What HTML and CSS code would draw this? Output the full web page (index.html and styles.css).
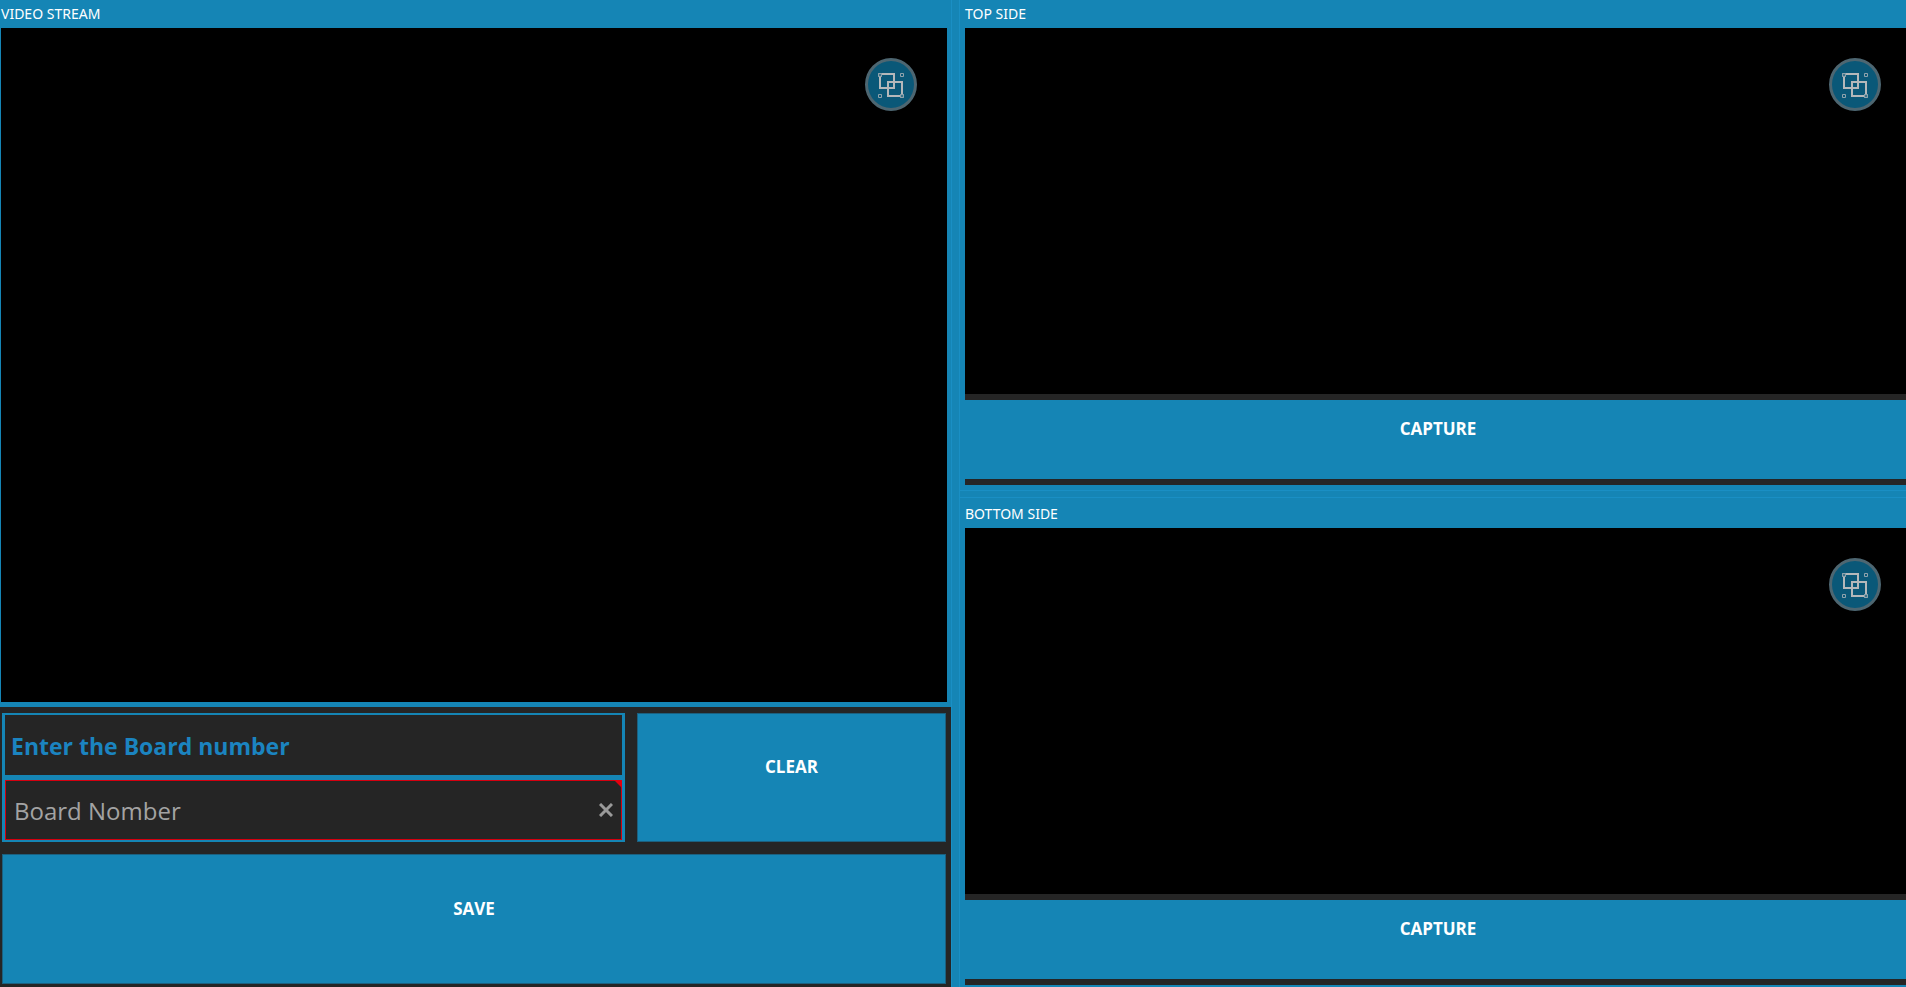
FILE: index.html
```html
<!DOCTYPE html>
<html lang="en">
<head>
<meta charset="utf-8">
<title>Board capture</title>
<link rel="stylesheet" href="styles.css">
</head>
<body>
<svg class="sprite" aria-hidden="true">
  <symbol id="overlap" viewBox="0 0 26 26">
    <g fill="none" stroke="#8fa3ad" stroke-width="1">
      <path d="M.5 1.500h3v3h-3zM22.500 1.500h3v3h-3zM.5 22.500h3v3h-3zM22.500 22.500h3v3h-3z"/>
    </g>
    <g fill="none" stroke="#b4b8ba" stroke-width="2">
      <path d="M2 2H16V16H2Z"/>
      <path d="M10 10H24V24H10Z"/>
    </g>
    <path d="M.5 1.500h3v3h-3zM22.500 22.500h3v3h-3z" fill="#3c7389" stroke="#8fa3ad" stroke-width="1"/>
  </symbol>
</svg>
<main class="app">
  <div class="left">
    <section class="stream">
      <h2 class="caption">VIDEO STREAM</h2>
      <div class="video">
        <button class="round" type="button" aria-label="Fit video stream"><svg class="icon"><use href="#overlap"/></svg></button>
      </div>
    </section>
    <form class="controls">
      <div class="field">
        <label class="field-label" for="board">Enter the Board number</label>
        <div class="field-box">
          <input class="field-input" id="board" type="text" placeholder="Board Nomber">
          <button class="field-clear" type="button" aria-label="Clear text">
            <svg class="cross" viewBox="0 0 14 14"><path d="M1 1L13 13M13 1L1 13" fill="none" stroke="#9a9a9a" stroke-width="3"/></svg>
          </button>
          <span class="field-error"></span>
        </div>
      </div>
      <button class="action" type="button">CLEAR</button>
      <button class="action save" type="button">SAVE</button>
    </form>
  </div>
  <div class="splitter"></div>
  <div class="right">
    <section class="side">
      <h2 class="caption">TOP SIDE</h2>
      <div class="video">
        <button class="round" type="button" aria-label="Fit top side"><svg class="icon"><use href="#overlap"/></svg></button>
      </div>
      <button class="capture" type="button">CAPTURE</button>
    </section>
    <div class="splitter-row"></div>
    <section class="side">
      <h2 class="caption">BOTTOM SIDE</h2>
      <div class="video">
        <button class="round" type="button" aria-label="Fit bottom side"><svg class="icon"><use href="#overlap"/></svg></button>
      </div>
      <button class="capture" type="button">CAPTURE</button>
    </section>
  </div>
</main>
</body>
</html>
```

FILE: styles.css
```css
:root {
  --blue: #1585b5;
  --line: #1a8fc4;
  --edge: #1c607f;
  --dark: #252525;
}

* {
  box-sizing: border-box;
}

body {
  margin: 0;
  background: var(--blue);
  color: #fff;
  font-family: "Open Sans", "Noto Sans", sans-serif;
}

button {
  margin: 0;
  padding: 0;
  border: 0;
  color: inherit;
  font: inherit;
  cursor: pointer;
}

.sprite {
  position: absolute;
  width: 0;
  height: 0;
}

.app {
  display: grid;
  grid-template-columns: 952fr 8px 946fr;
  height: 100vh;
  overflow: hidden;
}

.left {
  display: grid;
  grid-template-rows: 1fr auto;
  border-right: 1px solid var(--line);
}

.stream {
  display: flex;
  flex-direction: column;
  padding: 0 4px 5px 1px;
}

.caption {
  height: 28px;
  margin: 0;
  font-family: "Noto Sans", "Open Sans", sans-serif;
  font-size: 14px;
  font-weight: 400;
  line-height: 28px;
}

.video {
  display: flex;
  flex: 1;
  justify-content: flex-end;
  align-items: flex-start;
  padding: 30px 30px 0 0;
  background: #000;
}

.round {
  display: flex;
  align-items: center;
  justify-content: center;
  width: 52px;
  height: 53px;
  border: 3px solid #4d6671;
  border-radius: 50%;
  background: #0a5878;
}

.icon {
  width: 26px;
  height: 26px;
}

.controls {
  display: grid;
  grid-template-columns: 623fr 309fr;
  grid-template-rows: 129px 130px;
  gap: 12px;
  padding: 6px 5px 3px 2px;
  background: var(--dark);
}

.field {
  display: flex;
  flex-direction: column;
}

.field-label {
  height: 64px;
  padding-left: 6px;
  border: 2px solid var(--blue);
  border-width: 2px 3px;
  color: #1b84c0;
  font-size: 23px;
  font-weight: 700;
  line-height: 62px;
}

.field-box {
  position: relative;
  display: flex;
  flex: 1;
  border: solid var(--blue);
  border-width: 3px 3px 2px;
  box-shadow: inset 0 0 0 1px #d4000f;
}

.field-input {
  flex: 1;
  min-width: 0;
  padding: 0 0 0 9px;
  border: 0;
  outline: 0;
  background: none;
  color: #fff;
  font: 24px "Open Sans", "Noto Sans", sans-serif;
}

.field-input::placeholder {
  color: #a3a3a3;
  opacity: 1;
}

.field-clear {
  display: flex;
  align-items: center;
  justify-content: center;
  width: 32px;
  background: none;
}

.cross {
  width: 14px;
  height: 14px;
}

.field-error {
  position: absolute;
  top: 0;
  right: 0;
  width: 8px;
  height: 8px;
  background: #e3000f;
  clip-path: polygon(0 0, 100% 0, 100% 100%);
}

.action {
  padding-bottom: 22px;
  border: 1px solid var(--edge);
  background: var(--blue);
  font-size: 17px;
  font-weight: 700;
}

.save {
  grid-column: 1 / -1;
}

.splitter {
  border-right: 1px solid var(--line);
}

.right {
  display: grid;
  grid-template-rows: 490fr 8px 489fr;
}

.side {
  display: flex;
  flex-direction: column;
  padding: 0 0 5px 5px;
}

.side + .splitter-row + .side {
  padding-top: 2px;
  padding-bottom: 2px;
}

.side .video {
  padding-right: 25px;
}

.capture {
  height: 91px;
  padding: 0 0 22px 5px;
  border: solid var(--dark);
  border-width: 6px 0;
  background: var(--blue);
  font-size: 17px;
  font-weight: 700;
}

.splitter-row {
  border: solid var(--line);
  border-width: 1px 0;
}
```
